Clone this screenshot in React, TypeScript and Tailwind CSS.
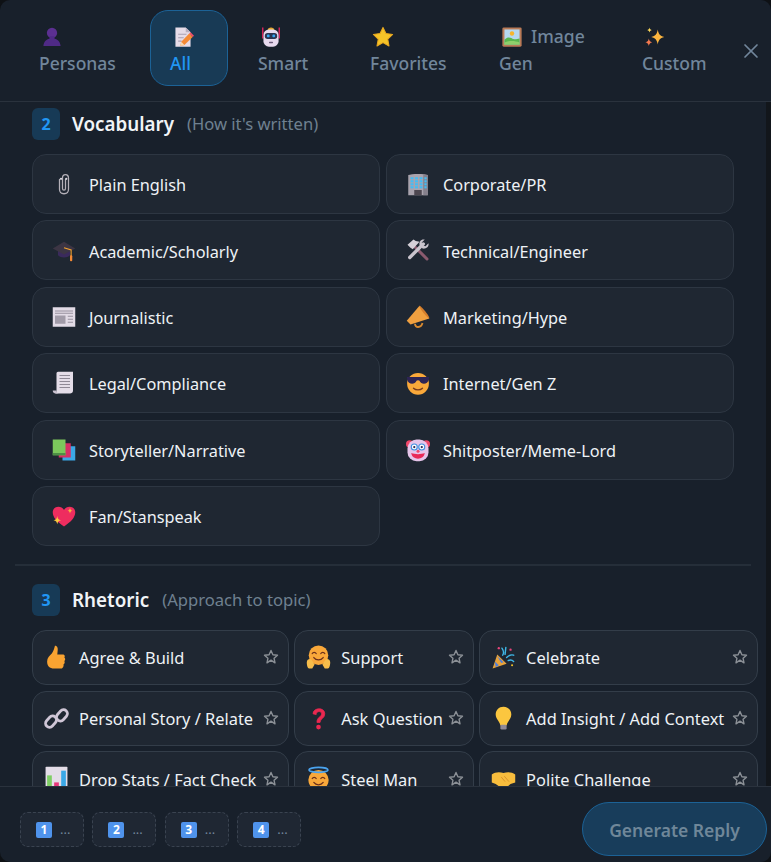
import React from "react";
import { X } from "lucide-react";

type IconProps = { className?: string };

function Emoji({ children, className = "w-[22px] h-[22px]" }: { children: React.ReactNode; className?: string }) {
  return (
    <svg viewBox="0 0 32 32" className={`shrink-0 ${className}`}>
      {children}
    </svg>
  );
}

const Bust = ({ className }: IconProps) => (
  <Emoji className={className}>
    <circle cx="16" cy="10" r="7.500" fill="#5b2f91" />
    <path d="M12.500 15h7v3c5 1.500 8.500 4.500 9 11H3.500c.5-6.500 4-9.500 9-11z" fill="#4f2a86" />
  </Emoji>
);
const Memo = ({ className }: IconProps) => (
  <Emoji className={className}>
    <path d="M5 2h15l7 7v21H5z" fill="#e6dce8" />
    <path d="M20 2l7 7h-7z" fill="#b9afc0" />
    <path d="M9 12h12M9 17h8M9 22h5" stroke="#a99fb1" strokeWidth="1.500" />
    <path d="M12 29l1.500-6L25 11l5 5-12 11.500z" fill="#f58a35" />
    <path d="M25 11l2-2 5 5-2 2z" fill="#f0516a" />
    <path d="M12 29l1.500-6 4.500 4.500z" fill="#f8d9b0" />
  </Emoji>
);
const Robot = ({ className }: IconProps) => (
  <Emoji className={className}>
    <path d="M4 2v16M28 2v16" stroke="#e0245e" strokeWidth="2" />
    <path d="M11 6c0-5 10-5 10 0z" fill="#e3a62f" />
    <rect x="5" y="5" width="22" height="25" rx="8" fill="#e7d9ee" />
    <rect x="7" y="10" width="18" height="9" rx="4" fill="#2c3650" />
    <rect x="10" y="12.500" width="4" height="4" rx="1.500" fill="#39a7f5" />
    <rect x="18" y="12.500" width="4" height="4" rx="1.500" fill="#39a7f5" />
    <rect x="13" y="23" width="6" height="2" rx="1" fill="#6b5b7b" />
  </Emoji>
);
const StarFill = ({ className }: IconProps) => (
  <Emoji className={className}>
    <path d="M16 2l4.300 9 9.700 1.300-7.100 6.800 1.800 9.900-8.700-4.800L7.300 29l1.800-9.900L2 12.300 11.700 11z" fill="#f5c428" stroke="#e9a81f" strokeWidth="1.500" strokeLinejoin="round" />
  </Emoji>
);
const Picture = ({ className }: IconProps) => (
  <Emoji className={className}>
    <rect x="2" y="2" width="28" height="28" rx="2" fill="#b97a57" />
    <rect x="5" y="5" width="22" height="22" fill="#b5d8f0" />
    <circle cx="16" cy="11" r="3.200" fill="#f7b52c" />
    <path d="M5 20c6-6 10-2 13-1 4 1 6-1 9-1v9H5z" fill="#58b74f" />
    <path d="M5 24c7-3 15-3 22 0v3H5z" fill="#8ed06b" />
  </Emoji>
);
const Sparkles = ({ className }: IconProps) => (
  <Emoji className={className}>
    <path d="M20 5c1 6 3 9.500 9.500 11-6.500 1.500-8.500 5-9.500 11-1-6-3-9.500-9.500-11C17 14.500 19 11 20 5z" fill="#fbb53f" />
    <path d="M7 18c.5 3 1.500 4.500 5 5.500-3.500 1-4.500 2.500-5 5.500-.5-3-1.500-4.500-5-5.500 3.500-1 4.500-2.500 5-5.500z" fill="#f4794f" />
    <path d="M8 2c.4 2 1 3 3.500 3.700C9 6.400 8.400 7.400 8 9.500 7.600 7.400 7 6.400 4.500 5.700 7 5 7.600 4 8 2z" fill="#f9d55a" />
  </Emoji>
);
const Clip = ({ className }: IconProps) => (
  <Emoji className={className}>
    <path d="M10 10v13c0 8 12 8 12 0V8c0-6-8-6-8 0v14c0 3 4 3 4 0V10" fill="none" stroke="#b4b0b8" strokeWidth="1.700" strokeLinecap="round" />
    <circle cx="12" cy="9" r="1.500" fill="#d8d5dc" />
    <circle cx="19" cy="9" r="1.500" fill="#d8d5dc" />
  </Emoji>
);
const Office = ({ className }: IconProps) => (
  <Emoji className={className}>
    <path d="M3 4c4-2 22-2 26 0v27H3z" fill="#a9a3ad" />
    <path d="M23 3l6 1v27h-6z" fill="#85808c" />
    {[7, 11, 15, 19].map(y => (
      <g key={y} fill="#42bdf5">
        <rect x="6" y={y} width="4" height="2.800" />
        <rect x="12" y={y} width="4" height="2.800" />
        <rect x="18" y={y} width="4" height="2.800" />
        <rect x="24.500" y={y} width="3" height="2.800" />
      </g>
    ))}
    <rect x="11" y="24" width="10" height="7" fill="#4d4750" />
  </Emoji>
);
const GradCap = ({ className }: IconProps) => (
  <Emoji className={className}>
    <path d="M8 15v8c4 4 12 4 16 0v-8z" fill="#3a2a5c" />
    <path d="M16 5L1 14l15 8 15-8z" fill="#3c3544" />
    <path d="M16 13l9.500 3v8" fill="none" stroke="#f0a02f" strokeWidth="1.500" />
    <rect x="24" y="23" width="3" height="8" rx="1.200" fill="#f58a35" />
  </Emoji>
);
const Tools = ({ className }: IconProps) => (
  <Emoji className={className}>
    <path d="M10 10l18 18" stroke="#8a5a6e" strokeWidth="4" strokeLinecap="round" />
    <path d="M2 9l8-7 3 2 5 1-9 10-3-2z" fill="#d5d0d8" />
    <path d="M23 8L5 26" stroke="#c9c4cd" strokeWidth="4.500" strokeLinecap="round" />
    <path d="M30 7l-4 4-4-1-1-4 4-4c-5-1-8 3-7 7l4 5c4 1 9-2 8-7z" fill="#c9c4cd" />
  </Emoji>
);
const Newspaper = ({ className }: IconProps) => (
  <Emoji className={className}>
    <rect x="1" y="3" width="30" height="26" fill="#e2dbe6" />
    <path d="M4 8h24M4 11h24" stroke="#8f8996" strokeWidth="1.200" />
    <rect x="4" y="14" width="14" height="11" fill="#a19ba8" />
    <path d="M21 15h7M21 19h7M21 23h7" stroke="#8f8996" strokeWidth="1.200" />
  </Emoji>
);
const Megaphone = ({ className }: IconProps) => (
  <Emoji className={className}>
    <path d="M18 1l13 17-25 8-5-5z" fill="#f0a040" />
    <path d="M18 1c2 0 14 14 13 17-2 0-14-14-13-17z" fill="#d57e2c" />
    <path d="M12 25c0 6 8 6 10-1" fill="none" stroke="#d8892f" strokeWidth="2.500" />
  </Emoji>
);
const Scroll = ({ className }: IconProps) => (
  <Emoji className={className}>
    <path d="M8 1h20v25c0 3-2 4-4 4H3c3 0 3-2 3-4V3c0-1 1-2 2-2z" fill="#e4dde8" />
    <path d="M10 6h14M10 10h14M10 14h14M10 18h14M10 22h14" stroke="#8f8996" strokeWidth="1.400" />
    <path d="M6 26H1c0 3 2 4 4 4h4c-2 0-3-2-3-4z" fill="#c9c1cf" />
  </Emoji>
);
const Cool = ({ className }: IconProps) => (
  <Emoji className={className}>
    <circle cx="16" cy="17" r="14.500" fill="#f9a83a" />
    <path d="M1 8h30l-1 4c-.5 6-10 7-12 1-.5-1-3.500-1-4 0-2 6-11.500 5-12-1z" fill="#2d2455" />
    <path d="M10 23c3 3 9 3 12 0" fill="none" stroke="#7a3b1f" strokeWidth="1.800" strokeLinecap="round" />
  </Emoji>
);
const Books = ({ className }: IconProps) => (
  <Emoji className={className}>
    <rect x="14" y="11" width="17" height="19" fill="#3ba8e6" />
    <rect x="9" y="7" width="16" height="19" fill="#d62f66" />
    <rect x="1" y="2" width="17" height="21" fill="#7cc85c" />
    <rect x="1" y="20" width="17" height="3" fill="#4d8f45" />
  </Emoji>
);
const Clown = ({ className }: IconProps) => (
  <Emoji className={className}>
    <circle cx="5" cy="8" r="5" fill="#f0476a" />
    <circle cx="27" cy="8" r="5" fill="#f0476a" />
    <rect x="2" y="2" width="28" height="29" rx="12" fill="#e6c5ea" />
    <circle cx="11" cy="12" r="4" fill="#fff" stroke="#3f8fe0" strokeWidth="1.500" />
    <circle cx="21" cy="12" r="4" fill="#fff" stroke="#3f8fe0" strokeWidth="1.500" />
    <circle cx="11" cy="12" r="1.500" fill="#2d2455" />
    <circle cx="21" cy="12" r="1.500" fill="#2d2455" />
    <path d="M7 20c5 2 13 2 18 0-1 10-17 10-18 0z" fill="#e82a57" />
    <circle cx="16" cy="17.500" r="2" fill="#f0476a" />
  </Emoji>
);
const SparkHeart = ({ className }: IconProps) => (
  <Emoji className={className}>
    <path d="M16 30C7 24 1 18 1 11c0-8 11-10 15-3 4-7 15-5 15 3 0 7-6 13-15 19z" fill="#ee2d5f" />
    <path d="M24 5c.4 2.500 1 3.500 3.500 4-2.500.5-3.100 1.500-3.500 4-.4-2.500-1-3.500-3.500-4 2.500-.5 3.100-1.500 3.500-4z" fill="#f9b33c" />
    <path d="M7 16c.6 3.500 1.500 5 5 5.500-3.500.5-4.400 2-5 5.500-.6-3.500-1.500-5-5-5.500 3.500-.5 4.400-2 5-5.500z" fill="#fcc83f" />
  </Emoji>
);
const Thumb = ({ className }: IconProps) => (
  <Emoji className={className}>
    <path d="M14 1c3 0 4 3 3.500 6L17 12h7c3 0 3 3 2 4 1.500 1 1.500 3.500 0 4.500 1 1.500.5 3.500-1 4 .5 2-.5 5.500-3 5.500H13c-6 0-9-3-9-9 0-4 3-7 6-10 2-3 3-6 4-10z" fill="#f9a331" />
  </Emoji>
);
const Hug = ({ className }: IconProps) => (
  <Emoji className={className}>
    <circle cx="16" cy="13" r="12.500" fill="#f9a83a" />
    <path d="M8 11c1-2 4-2 5 0M19 11c1-2 4-2 5 0" fill="none" stroke="#6b2f1a" strokeWidth="1.600" strokeLinecap="round" />
    <path d="M10 16c3 4 9 4 12 0" fill="none" stroke="#6b2f1a" strokeWidth="1.600" strokeLinecap="round" />
    <path d="M1 22c0-4 5-5 6-3l4 6-3 5H4c-2 0-3-4-3-8zM31 22c0-4-5-5-6-3l-4 6 3 5h4c2 0 3-4 3-8z" fill="#f7bd4b" />
  </Emoji>
);
const Popper = ({ className }: IconProps) => (
  <Emoji className={className}>
    <path d="M2 30l6-18 12 12z" fill="#e8a33a" />
    <path d="M5 21l5 5-4 2M8 14l8 8-3 1" fill="#4d7fe0" />
    <path d="M15 13c2-3 1-6-1-9M20 16c3-3 6-4 9-3M18 12l1-9M22 20c2-1 5-1 7 1" fill="none" stroke="#3fb8e8" strokeWidth="1.800" strokeLinecap="round" />
    <circle cx="10" cy="4" r="1.500" fill="#e8457b" />
    <circle cx="25" cy="6" r="1.500" fill="#e8457b" />
    <circle cx="27" cy="26" r="1.300" fill="#f5c428" />
  </Emoji>
);
const Link = ({ className }: IconProps) => (
  <Emoji className={className}>
    <g fill="none" stroke="#cfc6d6" strokeWidth="3.500">
      <rect x="1" y="15" width="16" height="10" rx="5" transform="rotate(-48 9 20)" />
      <rect x="15" y="7" width="16" height="10" rx="5" transform="rotate(-48 23 12)" />
    </g>
  </Emoji>
);
const Question = ({ className }: IconProps) => (
  <Emoji className={className}>
    <path d="M9 10c0-8 15-9 15 0 0 6-6 6-6 11h-4c0-7 6-7 6-11 0-4-7-4-7 1z" fill="#ea2850" stroke="#ea2850" strokeWidth="1" />
    <circle cx="16" cy="27" r="3" fill="#ea2850" />
  </Emoji>
);
const Bulb = ({ className }: IconProps) => (
  <Emoji className={className}>
    <path d="M16 1c-6 0-10 4.500-10 10 0 6 5 8 6 14h8c1-6 6-8 6-14 0-5.500-4-10-10-10z" fill="#fbc63f" />
    <rect x="12" y="24" width="8" height="6" rx="1.500" fill="#8f8996" />
  </Emoji>
);
const Chart = ({ className }: IconProps) => (
  <Emoji className={className}>
    <rect x="2" y="1" width="28" height="30" rx="1" fill="#e4dde8" />
    <rect x="4" y="12" width="6" height="19" fill="#7fcf65" />
    <rect x="13" y="21" width="6" height="10" fill="#e8377b" />
    <rect x="22" y="6" width="6" height="25" fill="#3ba8e6" />
  </Emoji>
);
const Halo = ({ className }: IconProps) => (
  <Emoji className={className}>
    <circle cx="16" cy="18" r="13" fill="#f9a83a" />
    <ellipse cx="16" cy="5" rx="12" ry="3.200" fill="none" stroke="#4aa3ee" strokeWidth="2.200" />
    <path d="M8 16c1-2 4-2 5 0M19 16c1-2 4-2 5 0M10 21c3 4 9 4 12 0" fill="none" stroke="#6b2f1a" strokeWidth="1.600" strokeLinecap="round" />
  </Emoji>
);
const Shake = ({ className }: IconProps) => (
  <Emoji className={className}>
    <path d="M1 11c4-3 9-4 15-2 6-2 11-1 15 2v10l-6 2-7 6c-2 1-4 0-5-1l-7-5-5-2z" fill="#f8bd3d" />
    <path d="M13 14l5 6M17 13l6 7" stroke="#d9912b" strokeWidth="1.200" />
  </Emoji>
);

function Keycap({ n }: { n: number }) {
  return (
    <span className="w-4 h-4 shrink-0 rounded-[2px] bg-[#4f93ec] text-white text-[12px] font-bold leading-4 text-center">
      {n}
    </span>
  );
}

function StarOutline() {
  return (
    <svg viewBox="0 0 16 16" className="w-4 h-4 shrink-0">
      <path
        d="M8 1.500l1.900 4.200 4.600.5-3.400 3.100.9 4.500L8 11.100l-4 2.700.9-4.500L1.500 6.200l4.600-.5z"
        fill="none"
        stroke="#8b9096"
        strokeWidth="1.400"
        strokeLinejoin="round"
      />
    </svg>
  );
}

const tabs = [
  { icon: Bust, first: "", second: "Personas", box: "w-[117px] mr-[14px]" },
  { icon: Memo, first: "", second: "All", box: "w-[78px] mr-[10px]", active: true },
  { icon: Robot, first: "", second: "Smart", box: "w-[92px] mr-[20px]" },
  { icon: StarFill, first: "", second: "Favorites", box: "w-[116px] mr-[13px]" },
  { icon: Picture, first: "Image", second: "Gen", box: "w-[125px] mr-[18px]" },
  { icon: Sparkles, first: "", second: "Custom", box: "w-[106px]" },
];

const vocabulary = [
  { icon: Clip, label: "Plain English" },
  { icon: Office, label: "Corporate/PR" },
  { icon: GradCap, label: "Academic/Scholarly" },
  { icon: Tools, label: "Technical/Engineer" },
  { icon: Newspaper, label: "Journalistic" },
  { icon: Megaphone, label: "Marketing/Hype" },
  { icon: Scroll, label: "Legal/Compliance" },
  { icon: Cool, label: "Internet/Gen Z" },
  { icon: Books, label: "Storyteller/Narrative" },
  { icon: Clown, label: "Shitposter/Meme-Lord" },
  { icon: SparkHeart, label: "Fan/Stanspeak" },
];

const rhetoric = [
  { icon: Thumb, label: "Agree & Build" },
  { icon: Hug, label: "Support" },
  { icon: Popper, label: "Celebrate" },
  { icon: Link, label: "Personal Story / Relate" },
  { icon: Question, label: "Ask Question" },
  { icon: Bulb, label: "Add Insight / Add Context" },
  { icon: Chart, label: "Drop Stats / Fact Check" },
  { icon: Halo, label: "Steel Man" },
  { icon: Shake, label: "Polite Challenge" },
];

function SectionTitle({ n, title, hint }: { n: number; title: string; hint: string }) {
  return (
    <div className="flex items-center h-8 ml-[32px]">
      <span className="w-7 h-8 rounded-md bg-[#173a56] text-[#2196f3] text-[16px] font-bold flex items-center justify-center">
        {n}
      </span>
      <span className="ml-3 text-[18.8px] font-semibold text-[#f1f4f7]">{title}</span>
      <span className="ml-[13px] text-[16.6px] text-[#6f8090]">{hint}</span>
    </div>
  );
}

export default function App() {
  return (
    <div className="w-[771px] h-[862px] bg-[#0e1115]" style={{ fontFamily: '"Noto Sans", sans-serif' }}>
      <div className="w-full h-full rounded-[10px] bg-[#18202b] flex flex-col overflow-hidden">
        <header className="h-[102px] shrink-0 border-b border-[#2a323d] flex pl-[19px] pt-[10px] relative">
          {tabs.map(t => {
            const Icon = t.icon;
            return (
              <div
                key={t.second}
                className={`${t.box} h-[76px] px-[19px] py-[12px] rounded-[18px] border text-[17.5px] font-medium leading-[27px] ${
                  t.active ? "bg-[#183a55] border-[#1c6296] text-[#2196f3]" : "border-transparent text-[#71869b]"
                }`}
              >
                <div className="flex items-center h-[27px] gap-[8px] pl-[2px]">
                  <Icon className="w-[22px] h-[22px]" />
                  {t.first && <span>{t.first}</span>}
                </div>
                <div className="whitespace-nowrap">{t.second}</div>
              </div>
            );
          })}
          <X className="absolute left-[738.500px] top-[39px] text-[#71869b]" size={24} strokeWidth={1.700} />
        </header>

        <div className="flex-1 min-h-0 overflow-hidden flex">
          <main className="w-[766px] shrink-0 pt-[6px]">
            <SectionTitle n={2} title="Vocabulary" hint="(How it's written)" />
            <div className="mt-[14px] ml-[32px] grid grid-cols-[348px_348px] gap-x-[6px] gap-y-[6.400px]">
              {vocabulary.map(v => {
                const Icon = v.icon;
                return (
                  <div key={v.label} className="h-[60px] rounded-[14px] border border-[#2d3642] bg-[#1f2732] flex items-center pl-[19px] gap-[13px] text-[16.3px] text-[#eef2f6]">
                    <Icon className="w-6 h-6" />
                    <span className="pt-[3px]">{v.label}</span>
                  </div>
                );
              })}
            </div>

            <div className="mt-[18px] ml-[15px] w-[736px] h-[2px] bg-[#252e39]" />

            <div className="mt-[18px]">
              <SectionTitle n={3} title="Rhetoric" hint="(Approach to topic)" />
            </div>
            <div className="mt-[14px] ml-[32px] grid grid-cols-[257px_179.500px_279px] gap-x-[5.300px] gap-y-[5.700px]">
              {rhetoric.map(r => {
                const Icon = r.icon;
                return (
                  <div key={r.label} className="h-[55px] rounded-[14px] border border-[#333d49] bg-[#1f2732] flex items-center pl-[11px] pr-[9px] text-[16.4px] text-[#eef2f6]">
                    <Icon className="w-[25px] h-[25px]" />
                    <span className="ml-[10px] pt-[2px] whitespace-nowrap flex-1">{r.label}</span>
                    <StarOutline />
                  </div>
                );
              })}
            </div>
          </main>
          <div className="w-[5px] shrink-0 bg-[#12161b]" />
        </div>

        <footer className="h-[76px] shrink-0 border-t border-[#2a323d] flex items-center pl-[20px] pr-[4px] justify-between">
          <div className="flex gap-[8.400px] mt-[10px]">
            {[1, 2, 3, 4].map(n => (
              <div key={n} className="w-[64px] h-[35px] rounded-lg border border-dashed border-[#3a4350] bg-[#1f2733] flex items-center pl-[15px] gap-[8px]">
                <Keycap n={n} />
                <span className="text-[13px] text-[#71869b] leading-none">...</span>
              </div>
            ))}
          </div>
          <div className="w-[185px] h-[54px] rounded-full border border-[#1c6296] bg-[#183d5b] flex items-center justify-center pt-[3px] text-[17.5px] font-semibold text-[#6f8799] mt-[9px]">
            Generate Reply
          </div>
        </footer>
      </div>
    </div>
  );
}
